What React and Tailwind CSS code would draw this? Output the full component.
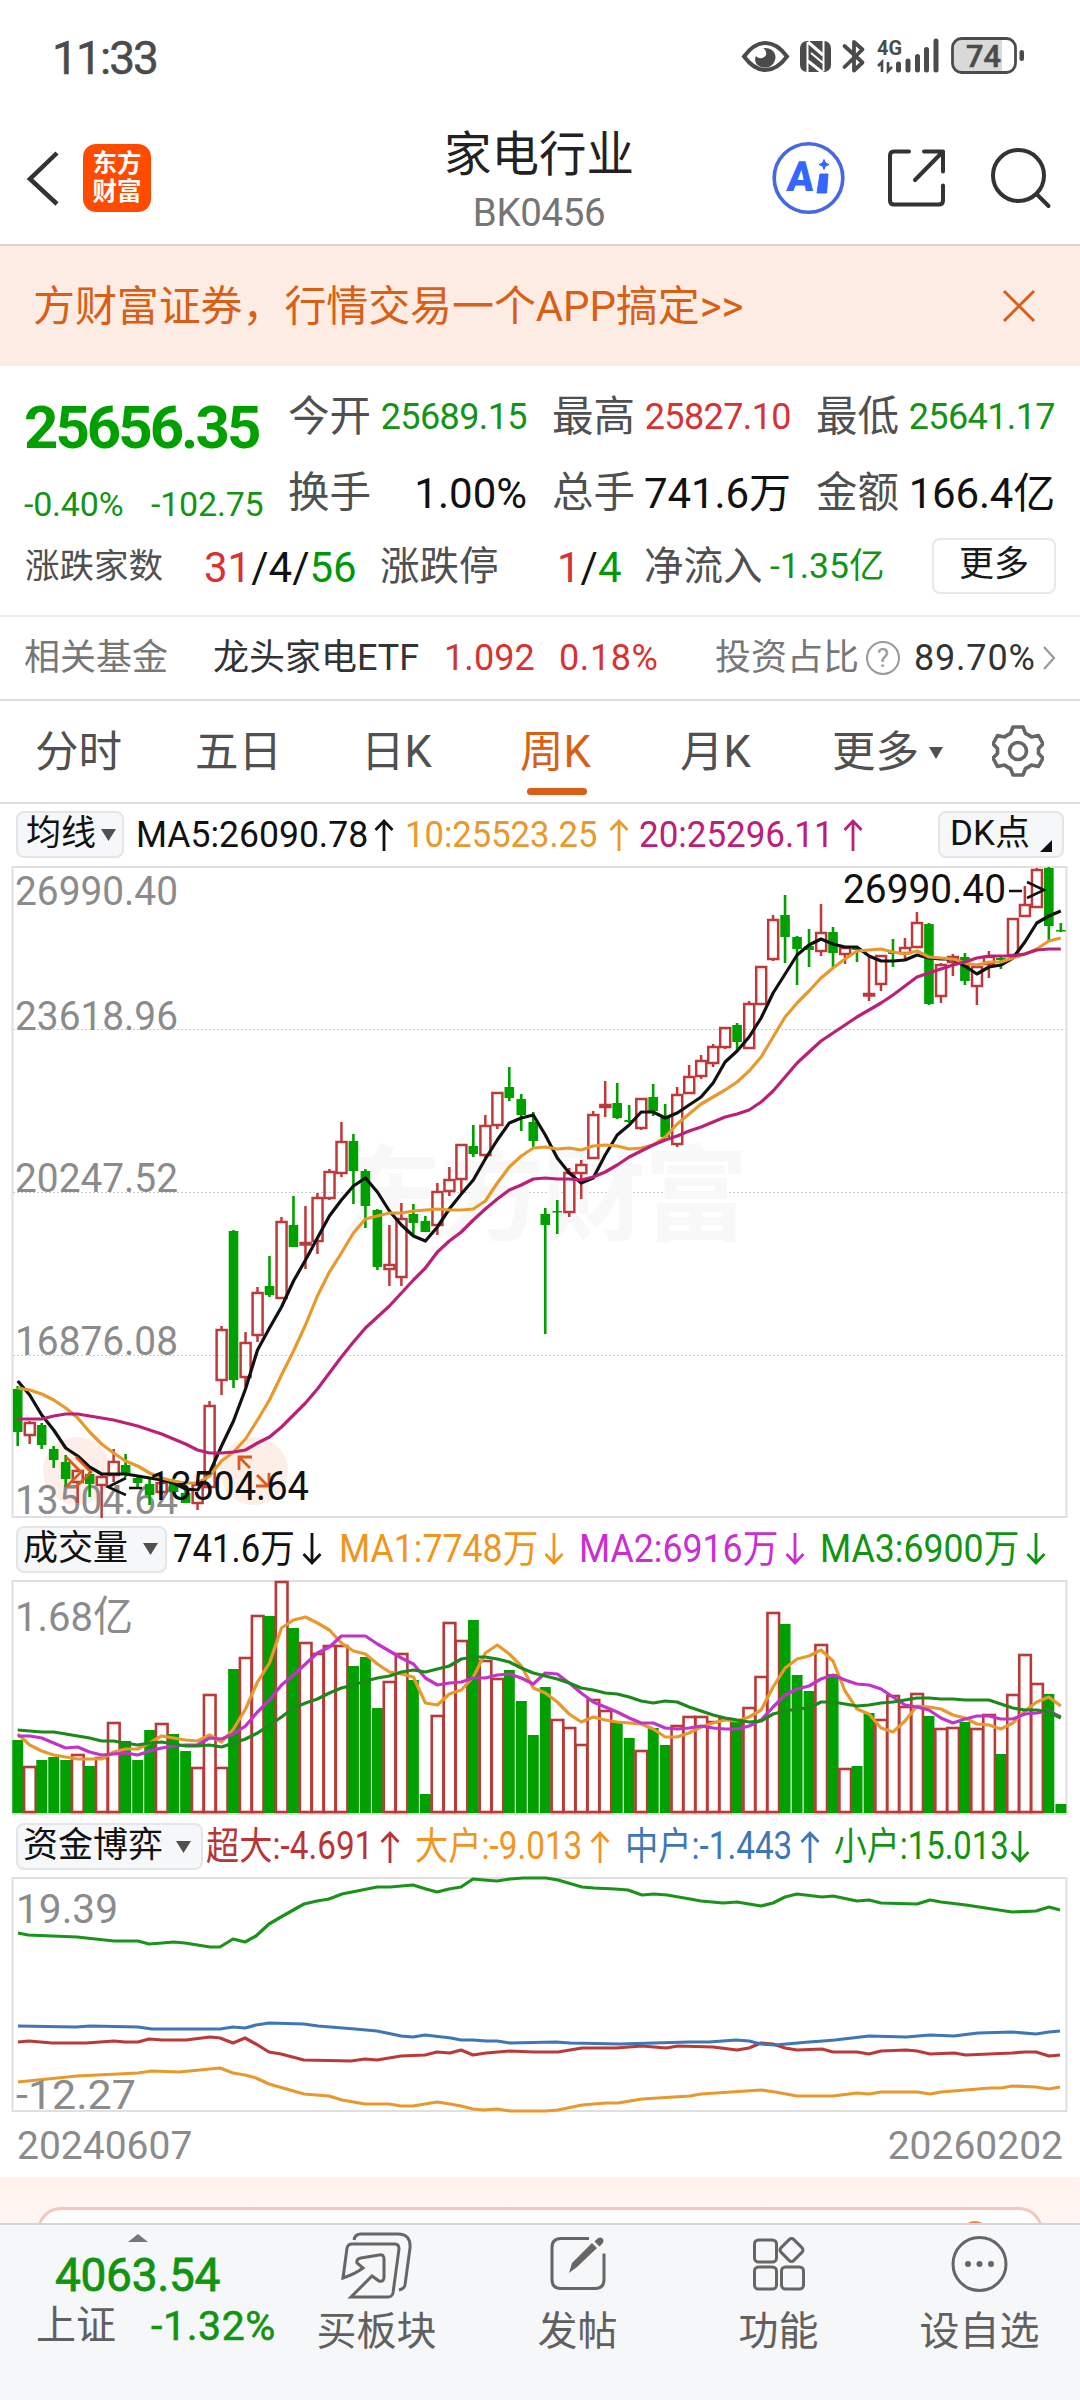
import React from "react";

const GREEN = "#00a000";
const RED = "#c0393a";
const STEP = 11.99;
const X0 = 17.7;

const barX = (i) => X0 + i * STEP;

// [direction, high, body top, body bottom, low]
const candles = [
  ["g", 1386, 1389, 1432, 1446], ["r", 1421, 1423, 1435, 1444], ["g", 1423, 1425, 1445, 1449],
  ["g", 1446, 1449, 1460, 1468], ["g", 1455, 1462, 1479, 1487], ["r", 1468, 1471, 1482, 1503],
  ["g", 1472, 1474, 1484, 1497], ["r", 1473, 1477, 1485, 1518], ["r", 1449, 1462, 1475, 1482],
  ["g", 1454, 1465, 1474, 1477], ["g", 1475, 1478, 1483, 1487], ["g", 1478, 1484, 1495, 1505],
  ["r", 1480, 1483, 1492, 1495], ["g", 1478, 1482, 1492, 1493], ["g", 1488, 1493, 1503, 1503],
  ["r", 1482, 1485, 1503, 1510], ["r", 1401, 1406, 1487, 1488], ["r", 1326, 1330, 1380, 1395],
  ["g", 1230, 1231, 1380, 1388], ["r", 1332, 1343, 1377, 1387], ["r", 1287, 1293, 1335, 1342],
  ["g", 1256, 1286, 1295, 1297], ["r", 1217, 1222, 1298, 1299], ["g", 1196, 1225, 1247, 1247],
  ["r", 1206, 1243, 1244, 1269], ["r", 1193, 1198, 1241, 1254], ["r", 1169, 1172, 1198, 1200],
  ["r", 1122, 1142, 1173, 1177], ["g", 1134, 1141, 1171, 1204], ["g", 1169, 1171, 1206, 1228],
  ["g", 1209, 1210, 1267, 1270], ["r", 1225, 1265, 1269, 1286], ["r", 1203, 1219, 1277, 1286],
  ["g", 1204, 1214, 1223, 1237], ["g", 1216, 1221, 1232, 1232], ["r", 1183, 1192, 1225, 1235],
  ["r", 1167, 1180, 1191, 1196], ["r", 1145, 1145, 1179, 1195], ["g", 1125, 1146, 1154, 1157],
  ["r", 1115, 1126, 1155, 1160], ["r", 1092, 1093, 1125, 1129], ["g", 1067, 1087, 1098, 1101],
  ["g", 1094, 1099, 1115, 1131], ["g", 1112, 1122, 1141, 1147], ["g", 1208, 1214, 1225, 1334],
  ["g", 1200, 1211, 1212, 1234], ["r", 1168, 1173, 1212, 1217], ["r", 1160, 1165, 1173, 1199],
  ["r", 1111, 1115, 1158, 1159], ["r", 1081, 1105, 1107, 1117], ["g", 1083, 1103, 1118, 1119],
  ["g", 1105, 1120, 1122, 1123], ["r", 1099, 1099, 1128, 1130], ["g", 1084, 1097, 1111, 1116],
  ["g", 1104, 1117, 1137, 1137], ["r", 1087, 1095, 1144, 1147], ["r", 1065, 1077, 1093, 1094],
  ["r", 1055, 1061, 1076, 1079], ["r", 1044, 1047, 1063, 1067], ["r", 1028, 1028, 1047, 1049],
  ["g", 1023, 1025, 1042, 1051], ["r", 1001, 1004, 1048, 1049], ["r", 967, 967, 1004, 1004],
  ["r", 915, 920, 959, 961], ["g", 895, 915, 937, 963], ["g", 936, 937, 949, 985],
  ["g", 929, 946, 950, 967], ["r", 904, 933, 951, 956], ["g", 927, 932, 953, 967],
  ["r", 946, 948, 954, 964], ["g", 946, 948, 950, 962], ["r", 957, 994, 995, 1001],
  ["r", 955, 956, 984, 991], ["g", 939, 952, 954, 967], ["r", 938, 948, 953, 960],
  ["r", 912, 923, 947, 947], ["g", 923, 924, 1004, 1005], ["r", 963, 965, 996, 1003],
  ["r", 954, 957, 962, 976], ["g", 953, 957, 981, 985], ["r", 967, 967, 986, 1005],
  ["r", 951, 957, 964, 978], ["g", 956, 958, 960, 969], ["r", 918, 919, 955, 956],
  ["r", 886, 905, 916, 917], ["r", 868, 870, 907, 908], ["g", 867, 868, 926, 940],
  ["g", 923, 930, 931, 932],
];

const ma5 = [
  1381, 1395, 1415, 1430, 1448, 1456, 1467, 1474, 1474, 1474, 1476, 1478, 1480, 1483, 1489, 1490,
  1473, 1446, 1421, 1389, 1350, 1328, 1307, 1281, 1260, 1238, 1216, 1200, 1186, 1178, 1192, 1211,
  1225, 1236, 1241, 1227, 1209, 1194, 1180, 1159, 1140, 1123, 1118, 1115, 1135, 1158, 1173, 1183,
  1178, 1155, 1135, 1125, 1112, 1112, 1118, 1113, 1105, 1097, 1083, 1062, 1051, 1037, 1018, 993,
  974, 955, 945, 939, 944, 947, 947, 956, 961, 961, 960, 955, 958, 959, 959, 966, 974, 967, 965,
  958, 942, 923, 916, 911,
];
const ma10 = [
  1388, 1390, 1394, 1400, 1408, 1418, 1432, 1444, 1453, 1461, 1466, 1473, 1478, 1481, 1483, 1483,
  1476, 1461, 1452, 1439, 1420, 1400, 1375, 1351, 1325, 1296, 1272, 1253, 1233, 1219, 1216, 1213,
  1213, 1211, 1210, 1209, 1210, 1210, 1209, 1201, 1183, 1167, 1156, 1148, 1147, 1149, 1148, 1150,
  1146, 1145, 1146, 1149, 1148, 1145, 1137, 1124, 1114, 1104, 1097, 1090, 1082, 1071, 1057, 1037,
  1017, 1003, 991, 978, 968, 959, 951, 950, 949, 952, 954, 951, 957, 958, 959, 963, 965, 962, 962,
  958, 954, 949, 941, 938,
];
const ma20 = [
  1419, 1419, 1419, 1416, 1414, 1414, 1416, 1418, 1420, 1423, 1426, 1430, 1434, 1439, 1444, 1450,
  1453, 1453, 1452, 1450, 1443, 1437, 1427, 1415, 1403, 1389, 1373, 1357, 1342, 1328, 1317, 1306,
  1293, 1280, 1268, 1252, 1241, 1232, 1220, 1209, 1199, 1190, 1185, 1179, 1178, 1179, 1179, 1180,
  1177, 1172, 1165, 1157, 1151, 1145, 1140, 1136, 1131, 1127, 1122, 1117, 1114, 1110, 1102, 1091,
  1077, 1063, 1052, 1041, 1033, 1025, 1017, 1010, 1003, 995, 986, 977, 973, 969, 965, 962, 958,
  956, 956, 956, 954, 950, 949, 949,
];

const volumes = [
  ["g", 1740], ["r", 1767], ["g", 1760], ["g", 1757], ["g", 1760], ["r", 1755], ["g", 1766], ["r", 1758],
  ["r", 1723], ["g", 1741], ["g", 1760], ["g", 1730], ["r", 1724], ["g", 1734], ["g", 1751], ["r", 1768],
  ["r", 1695], ["r", 1768], ["g", 1669], ["r", 1658], ["r", 1616], ["g", 1616], ["r", 1582], ["g", 1628],
  ["r", 1643], ["r", 1654], ["r", 1646], ["r", 1646], ["g", 1666], ["g", 1657], ["g", 1708], ["r", 1682],
  ["r", 1654], ["g", 1680], ["g", 1794], ["r", 1716], ["r", 1623], ["r", 1641], ["g", 1620], ["r", 1661],
  ["r", 1679], ["g", 1670], ["g", 1701], ["g", 1735], ["g", 1687], ["r", 1720], ["r", 1728], ["r", 1745],
  ["r", 1700], ["r", 1711], ["g", 1722], ["g", 1738], ["r", 1751], ["g", 1728], ["g", 1745], ["r", 1726],
  ["r", 1717], ["r", 1717], ["r", 1722], ["r", 1719], ["g", 1722], ["r", 1708], ["r", 1677], ["r", 1613],
  ["g", 1624], ["g", 1675], ["g", 1691], ["r", 1645], ["g", 1674], ["r", 1769], ["g", 1766], ["g", 1713],
  ["r", 1720], ["r", 1696], ["r", 1707], ["r", 1694], ["g", 1716], ["r", 1729], ["r", 1728], ["g", 1722],
  ["r", 1729], ["r", 1715], ["g", 1754], ["r", 1695], ["r", 1655], ["r", 1684], ["g", 1694], ["g", 1804],
];

const volMa1 = [
  1734, 1745, 1751, 1755, 1757, 1759, 1759, 1759, 1752, 1749, 1749, 1743, 1736, 1738, 1740, 1741,
  1735, 1742, 1729, 1709, 1682, 1663, 1628, 1620, 1617, 1623, 1630, 1643, 1651, 1654, 1664, 1672,
  1674, 1677, 1703, 1705, 1694, 1690, 1677, 1653, 1645, 1654, 1666, 1688, 1693, 1702, 1714, 1722,
  1717, 1720, 1722, 1723, 1724, 1729, 1737, 1737, 1733, 1727, 1723, 1720, 1721, 1717, 1710, 1687,
  1668, 1659, 1656, 1650, 1661, 1691, 1709, 1714, 1728, 1732, 1721, 1706, 1707, 1709, 1715, 1718,
  1724, 1725, 1729, 1723, 1711, 1702, 1697, 1706,
];
const volMa2 = [
  1736, 1736, 1738, 1743, 1748, 1747, 1752, 1755, 1754, 1753, 1755, 1751, 1748, 1746, 1745, 1745,
  1738, 1739, 1734, 1726, 1712, 1700, 1685, 1675, 1664, 1653, 1647, 1636, 1636, 1636, 1644, 1651,
  1658, 1664, 1678, 1685, 1683, 1682, 1678, 1678, 1675, 1674, 1678, 1684, 1673, 1674, 1683, 1693,
  1702, 1707, 1712, 1718, 1723, 1723, 1728, 1729, 1728, 1726, 1728, 1729, 1729, 1726, 1720, 1707,
  1695, 1689, 1686, 1679, 1675, 1680, 1684, 1685, 1689, 1697, 1705, 1707, 1710, 1718, 1723, 1719,
  1716, 1716, 1719, 1719, 1714, 1713, 1711, 1717,
];
const volMa3 = [
  1730, 1731, 1732, 1732, 1734, 1736, 1738, 1741, 1741, 1743, 1745, 1743, 1742, 1744, 1746, 1746,
  1745, 1747, 1743, 1739, 1733, 1725, 1717, 1708, 1703, 1699, 1693, 1688, 1685, 1681, 1678, 1676,
  1672, 1670, 1672, 1669, 1666, 1659, 1657, 1657, 1659, 1662, 1668, 1673, 1676, 1679, 1683, 1688,
  1690, 1693, 1694, 1697, 1701, 1703, 1701, 1702, 1707, 1711, 1715, 1718, 1720, 1722, 1721, 1714,
  1711, 1709, 1708, 1702, 1702, 1704, 1706, 1705, 1703, 1702, 1700, 1698, 1698, 1699, 1699, 1700,
  1700, 1700, 1704, 1708, 1710, 1710, 1712, 1718,
];

const flows = [
  { color: "#b93a38", points: "18,2042 29,2041 52,2043 86,2043 114,2041 125,2042 138,2042 149,2039 162,2040 186,2040 210,2037 220,2038 233,2043 245,2038 256,2044 269,2052 281,2054 304,2060 351,2061 365,2059 377,2060 401,2056 425,2055 437,2052 450,2053 461,2050 473,2055 486,2053 510,2051 534,2052 558,2052 582,2048 616,2048 642,2046 666,2048 678,2046 713,2047 737,2050 749,2048 761,2043 773,2044 785,2048 797,2050 822,2049 833,2052 857,2052 869,2054 881,2051 906,2050 917,2051 930,2054 954,2053 966,2055 1012,2053 1025,2052 1036,2052 1049,2056 1060,2055" },
  { color: "#e8992e", points: "18,2082 77,2076 138,2073 152,2071 179,2072 210,2069 220,2068 233,2073 245,2075 256,2078 269,2084 304,2094 329,2096 342,2100 365,2104 389,2104 401,2106 413,2106 437,2102 450,2104 461,2106 473,2109 484,2110 497,2109 510,2111 546,2111 558,2110 582,2105 606,2103 618,2103 642,2099 690,2096 701,2094 761,2090 775,2092 797,2096 822,2096 833,2096 857,2093 869,2094 881,2092 917,2092 930,2094 941,2092 978,2089 990,2088 1001,2088 1012,2086 1036,2087 1049,2089 1060,2087" },
  { color: "#3f76b5", points: "18,2026 76,2027 90,2026 138,2027 152,2029 220,2029 233,2027 245,2028 256,2025 269,2023 304,2024 318,2026 355,2029 377,2031 401,2036 413,2037 425,2035 451,2038 461,2040 473,2040 486,2041 497,2041 510,2043 556,2042 570,2043 620,2044 689,2042 709,2042 736,2040 749,2041 761,2044 775,2045 809,2042 823,2041 835,2040 869,2036 906,2037 930,2035 954,2036 978,2033 1012,2032 1036,2034 1049,2032 1060,2031" },
  { color: "#1b931b", points: "18,1933 28,1935 52,1936 77,1937 114,1941 138,1941 149,1944 162,1943 174,1942 185,1943 210,1947 220,1947 233,1939 245,1942 256,1936 269,1924 281,1917 304,1904 317,1901 329,1899 342,1894 377,1887 390,1887 413,1885 426,1889 437,1892 449,1889 461,1887 473,1879 484,1880 497,1881 510,1879 523,1878 546,1878 558,1880 582,1887 594,1888 615,1889 628,1890 642,1895 654,1894 667,1895 690,1899 701,1901 723,1903 737,1902 761,1906 773,1903 785,1897 797,1894 822,1897 833,1896 857,1901 869,1900 881,1903 917,1904 930,1900 941,1902 966,1905 1012,1912 1036,1911 1049,1907 1060,1910" },
];

const Line = ({ data, color, width = 3.2 }) => (
  <polyline
    points={data.map((y, i) => `${barX(i).toFixed(1)},${y}`).join(" ")}
    fill="none"
    stroke={color}
    strokeWidth={width}
    strokeLinejoin="round"
  />
);

const AxisText = ({ x, y, w, color = "#8b8b8b", children }) => (
  <text x={x} y={y} textLength={w} lengthAdjust="spacingAndGlyphs" fontSize="41.5" fill={color}>
    {children}
  </text>
);

const Arrow = ({ down = false, className = "" }) => (
  <svg
    width="20"
    height="34"
    viewBox="0 0 20 34"
    fill="none"
    stroke="currentColor"
    strokeWidth="2.8"
    className={`shrink-0 ${down ? "rotate-180" : ""} ${className}`}
  >
    <path d="M10 33V3M1.5 12 10 3l8.5 9" />
  </svg>
);

const Caret = ({ className = "" }) => (
  <svg width="15" height="12" viewBox="0 0 15 12" className={`shrink-0 ${className}`}>
    <path d="M0 0h15L7.500 12z" fill="#505050" />
  </svg>
);

const StatusBar = () => (
  <div className="flex h-[115px] items-start pl-[52px] pt-[32px] text-[#4b4b4b]">
    <span className="w-[689px] text-[46px] leading-[53px] tracking-[-1.9px] [-webkit-text-stroke:0.5px_#4b4b4b]">11:33</span>
    <svg width="290" height="46" viewBox="741 34 290 46" className="mt-[1px]" fill="none">
      <path d="M744 57.500Q754 44 765.500 44T787 57.500Q777 71 765.500 71T744 57.500z" stroke="#4b4b4b" strokeWidth="4" />
      <path d="M763 49c10-1 14 6 12 12-2 7-9 9-14 7-6-2-7-8-5-11 2 3 8 3 10-1 1-3-1-6-3-7z" fill="#4b4b4b" />
      <rect x="800" y="42" width="31" height="31" rx="7" fill="#4b4b4b" />
      <path d="M807.500 43v30M823.500 42v30" stroke="#fff" strokeWidth="2" />
      <path d="M808 43l15 13M808 62l15 12" stroke="#fff" strokeWidth="3" />
      <path d="M811 54l12 10" stroke="#fff" strokeWidth="2" />
      <path d="m844.500 47 18 16.500-8.500 8V43l8.500 7.500L844.500 68" stroke="#4b4b4b" strokeWidth="3.800" strokeLinejoin="round" strokeLinecap="round" />
      <text x="877" y="56" fontSize="21" fontWeight="700" fill="#4b4b4b" textLength="25" lengthAdjust="spacingAndGlyphs">4G</text>
      <path d="M882 73V63l-4 4M888 63v9l4-4" stroke="#4b4b4b" strokeWidth="2.600" />
      <path d="M898.500 65v6M908 62v9M917.500 57.500V71M926.500 50.500V71M936 42v29" stroke="#4b4b4b" strokeWidth="5" strokeLinecap="round" />
      <path d="M960 40h42v33h-42q-7 0-7-7V47q0-7 7-7z" fill="#d9d9d9" />
      <rect x="952.500" y="39.500" width="63" height="34" rx="9" stroke="#4b4b4b" strokeWidth="2.800" />
      <rect x="1019.500" y="51" width="4.500" height="11" rx="2.200" fill="#4b4b4b" />
      <text x="966" y="67.500" fontSize="32" fontWeight="500" fill="#4b4b4b" stroke="#4b4b4b" strokeWidth="0.6" textLength="35" lengthAdjust="spacingAndGlyphs">74</text>
    </svg>
  </div>
);

const Header = () => (
  <header className="flex h-[131px] items-start border-b-2 border-[#d6d6d6]">
    <svg width="36" height="60" viewBox="0 0 36 60" fill="none" className="ml-[24px] mt-[33px]">
      <path d="M33 5 6 31l27 25" stroke="#333" strokeWidth="4.500" />
    </svg>
    <div className="ml-[23px] mt-[29px] flex h-[68px] w-[68px] flex-col items-center justify-center rounded-[13px] bg-[#ff4b00] text-[24.5px] font-bold leading-[28px] text-white">
      <span>东方</span>
      <span>财富</span>
    </div>
    <div className="ml-[265px] w-[246px] text-center">
      <h1 className="whitespace-nowrap pt-[10px] text-[47.5px] leading-[60px] text-[#222]">家电行业</h1>
      <p className="pt-[6px] text-[38.5px] leading-[44px] tracking-[-0.4px] text-[#757575]">BK0456</p>
    </div>
    <svg width="300" height="80" viewBox="760 138 300 80" fill="none" className="ml-[98px] mt-[23px]">
      <circle cx="808.500" cy="178" r="34.300" stroke="#4468e6" strokeWidth="3.600" />
      <g transform="translate(786 191) skewX(-5)">
        <text x="0" y="0" fontSize="42" fontWeight="900" fill="#3566ff" textLength="27" lengthAdjust="spacingAndGlyphs">A</text>
      </g>
      <path d="M820 174h8l-1.500 19H817z" fill="#3566ff" stroke="#3566ff" strokeWidth="1" strokeLinejoin="round" />
      <path d="m824 159.500 1.500 3.500 3.500 1.500-3.500 1.500-1.500 3.500-1.500-3.500-3.500-1.500 3.500-1.500z" fill="#3566ff" stroke="#3566ff" />
      <path
        d="M909 151.500h-15q-4 0-4 4v45q0 4 4 4h45q4 0 4-4V185.500M924 151.500h19v20M943 151.500 915 180"
        stroke="#333"
        strokeWidth="4"
        strokeLinecap="round"
        strokeLinejoin="round"
      />
      <circle cx="1018.500" cy="175.500" r="25.500" stroke="#333" strokeWidth="4" />
      <path d="m1036.500 194 12 12" stroke="#333" strokeWidth="4" strokeLinecap="round" />
    </svg>
  </header>
);

const Banner = () => (
  <div className="flex h-[120px] items-center justify-between bg-[#fcece3] pl-[33px] pr-[44px] text-[#d95f16]">
    <span className="whitespace-nowrap text-[42px] tracking-[-0.1px]">方财富证券，行情交易一个APP搞定&gt;&gt;</span>
    <svg width="34" height="34" viewBox="0 0 34 34" fill="none" stroke="currentColor" strokeWidth="3">
      <path d="m2 2 30 30M32 2 2 32" />
    </svg>
  </div>
);

const Stat = ({ label, value, className }) => (
  <div className="flex w-[239px] items-center justify-between whitespace-nowrap">
    <span className="text-[41.5px] text-[#505050]">{label}</span>
    <span className={className}>{value}</span>
  </div>
);

const Quote = () => (
  <section className="h-[249px]">
    <div className="flex h-[164px]">
      <div className="w-[288px] pl-[24px] text-[#00a000]">
        <div className="mt-[25px] text-[60px] font-bold leading-[74px] tracking-[-3px]">25656.35</div>
        <div className="mt-[18px] flex whitespace-nowrap text-[34px] leading-[42px] tracking-[-0.2px] text-[#149414]">
          <span className="w-[127px]">-0.40%</span>
          <span>-102.75</span>
        </div>
      </div>
      <div className="grid h-[164px] grid-cols-[239px_239px_239px] grid-rows-[76px_76px] gap-x-[25px] pt-[13px]">
        <Stat label="今开" value="25689.15" className="text-[36px] tracking-[-0.6px] text-[#149414]" />
        <Stat label="最高" value="25827.10" className="text-[36px] tracking-[-0.6px] text-[#d63333]" />
        <Stat label="最低" value="25641.17" className="text-[36px] tracking-[-0.6px] text-[#149414]" />
        <Stat label="换手" value="1.00%" className="text-[42px] text-[#111]" />
        <Stat label="总手" value="741.6万" className="text-[42px] tracking-[-0.1px] text-[#111]" />
        <Stat label="金额" value="166.4亿" className="text-[42px] tracking-[-0.2px] text-[#111]" />
      </div>
    </div>
    <div className="flex h-[74px] items-center whitespace-nowrap pl-[25px]">
      <span className="w-[179px] text-[34.5px] text-[#505050]">涨跌家数</span>
      <span className="w-[176px] text-[42px] text-[#111]">
        <b className="font-normal text-[#d63333]">31</b>/4/<b className="font-normal text-[#00980a]">56</b>
      </span>
      <span className="w-[177px] text-[39.500px] text-[#505050]">涨跌停</span>
      <span className="w-[87px] text-[42px] text-[#111]">
        <b className="font-normal text-[#d63333]">1</b>/<b className="font-normal text-[#00980a]">4</b>
      </span>
      <span className="w-[126px] text-[39.500px] text-[#505050]">净流入</span>
      <span className="w-[162px] text-[35.500px] text-[#149414]">-1.35亿</span>
      <span className="mt-[-3px] flex h-[56px] w-[124px] items-center justify-center rounded-[8px] border-2 border-[#e6e8ea] text-[35px] text-[#1a1a1a]">
        更多
      </span>
    </div>
  </section>
);

const Funds = () => (
  <div className="flex h-[86px] items-center whitespace-nowrap border-b-2 border-t-2 border-b-[#dcdcdc] border-t-[#ededed] pb-[1px] pl-[24px] text-[36px] text-[#333]">
    <span className="w-[189px] text-[36px] text-[#777]">相关基金</span>
    <span className="w-[231px] text-[36px]">龙头家电ETF</span>
    <span className="w-[115px] tracking-[0.1px] text-[#d63333]">1.092</span>
    <span className="w-[156px] tracking-[0.6px] text-[#d63333]">0.18%</span>
    <span className="w-[151px] text-[36px] text-[#777]">投资占比</span>
    <span className="mr-[14px] flex h-[34px] w-[34px] items-center justify-center rounded-full border-[2.500px] border-[#999] text-[26px] leading-none text-[#999]">?</span>
    <span className="w-[128px] tracking-[0.8px]">89.70%</span>
    <svg width="14" height="28" viewBox="0 0 14 28" fill="none" stroke="#999" strokeWidth="2.200">
      <path d="m2 3 10 11L2 25" />
    </svg>
  </div>
);

const tabs = [
  { name: "分时", width: "w-[160px]" },
  { name: "五日", width: "w-[166px]" },
  { name: "日K", width: "w-[159px]" },
  { name: "周K", width: "w-[160px]", active: true },
  { name: "月K", width: "w-[152px]" },
];

const Tabs = () => (
  <nav className="flex h-[103px] items-start whitespace-nowrap border-b-2 border-[#dcdcdc] pl-[35px] text-[43.5px] text-[#505050]">
    {tabs.map((tab) => (
      <div key={tab.name} className={tab.width}>
        <div className={tab.active ? "w-fit text-[#d95f16]" : "w-fit"}>
          <div className="pt-[19px] leading-[66px]">{tab.name}</div>
          {tab.active && <div className="ml-[7px] mt-[2px] h-[7px] w-[60px] rounded-full bg-[#d95f16]" />}
        </div>
      </div>
    ))}
    <div className="flex w-[160px] items-center pt-[19px] leading-[66px]">
      更多
      <svg width="14" height="12" viewBox="0 0 14 12" className="ml-[10px]">
        <path d="M0 0h14L7 12z" fill="#505050" />
      </svg>
    </div>
    <svg width="52" height="52" viewBox="-26 -26 52 52" fill="none" stroke="#666" strokeWidth="3.600" strokeLinejoin="round" className="mt-[24px]">
      <path d="M-5-24H5L7.500-17.500Q11-16 13.500-14L20.500-15.500 25-7 20.500-2.500V2.500L25 7 20.500 15.500 13.500 14Q11 16 7.500 17.500L5 24H-5L-7.500 17.500Q-11 16-13.500 14L-20.500 15.500-25 7-20.500 2.500V-2.500L-25-7-20.500-15.500-13.500-14Q-11-16-7.500-17.500z" />
      <circle r="8.500" />
    </svg>
  </nav>
);

const PickButton = ({ children, className = "" }) => (
  <div className={`flex h-[47px] shrink-0 items-center rounded-[8px] border-2 border-[#e3e5e9] bg-[#f6f7f9] text-[35px] text-[#111] ${className}`}>
    {children}
  </div>
);

const CandleChart = () => (
  <svg width="1080" height="656" viewBox="0 864 1080 656" className="block overflow-visible">
    <g stroke="#e0e0e0" strokeWidth="2" fill="none">
      <rect x="12.500" y="867" width="1054" height="650" />
      <path d="M13 1029.500H1066M13 1192.500H1066M13 1355.500H1066" stroke="#ccc" strokeWidth="1" strokeDasharray="2 2" />
    </g>
    <text x="338" y="1233" fontSize="104" fontWeight="700" fill="#f8f8f8" textLength="410">东方财富</text>
    <circle cx="77" cy="1471" r="34" fill="#fdeee7" />
    <circle cx="254" cy="1471" r="34" fill="#fdeee7" />
    <g fill="#8b8b8b">
      <AxisText x="15" y="905" w="163">26990.40</AxisText>
      <AxisText x="15" y="1030" w="163">23618.96</AxisText>
      <AxisText x="15" y="1192" w="163">20247.52</AxisText>
      <AxisText x="15" y="1355" w="163">16876.08</AxisText>
      <AxisText x="15" y="1514" w="163">13504.64</AxisText>
    </g>
    {candles.map(([dir, high, top, bottom, low], i) => {
      const x = barX(i);
      const h = Math.max(bottom - top, 1.500);
      return dir === "g" ? (
        <g key={i} fill={GREEN}>
          <rect x={x - 1.3} y={high} width="2.600" height={low - high} />
          <rect x={x - 4.8} y={top} width="9.600" height={h} />
        </g>
      ) : (
        <g key={i} stroke={RED} strokeWidth="2.500" fill="none">
          <path d={`M${x} ${high}V${top}M${x} ${bottom}V${low}`} />
          <rect x={x - 4.9} y={top} width="10" height={h} />
        </g>
      );
    })}
    <Line data={ma5} color="#111" />
    <Line data={ma10} color="#e8992e" />
    <Line data={ma20} color="#bb2079" />
    <path d="m66 1457 15 15-15 15M76 1457l15 15-15 15" stroke="#dd5a1a" strokeWidth="2.800" fill="none" />
    <path d="M239 1470v-13h13M240 1458l10 10M256 1486h13v-13M267 1485l-10-10" stroke="#dd5a1a" strokeWidth="2.800" fill="none" />
    <path d="M126 1478 108 1487l18 8M129 1488h13M1009 891h13M1027 882l17 8-17 8" stroke="#111" strokeWidth="2.600" fill="none" />
    <AxisText x="843" y="903" w="163" color="#111">26990.40</AxisText>
    <AxisText x="149" y="1500" w="160" color="#111">13504.64</AxisText>
  </svg>
);

const VolumeChart = () => (
  <svg width="1080" height="240" viewBox="0 1578 1080 240" className="block overflow-visible">
    <rect x="12.500" y="1581" width="1054" height="233" stroke="#e0e0e0" strokeWidth="2" fill="none" />
    <AxisText x="15" y="1631" w="118">1.68亿</AxisText>
    {volumes.map(([dir, top], i) =>
      dir === "g" ? (
        <rect key={i} x={barX(i) - 5.4} y={top} width="10.900" height={1813 - top} fill={GREEN} />
      ) : (
        <rect key={i} x={barX(i) - 5.6} y={top} width="11.600" height={1812 - top} fill="#fff" stroke="#b93a38" strokeWidth="2.600" />
      )
    )}
    <Line data={volMa1} color="#e8992e" />
    <Line data={volMa2} color="#c233c9" />
    <Line data={volMa3} color="#1b891b" />
  </svg>
);

const FlowChart = () => (
  <svg width="1080" height="240" viewBox="0 1875 1080 240" className="block overflow-visible">
    <rect x="12.500" y="1878" width="1054" height="233" stroke="#e0e0e0" strokeWidth="2" fill="none" />
    <AxisText x="16" y="1923" w="102">19.39</AxisText>
    {flows.map((flow) => (
      <polyline key={flow.color} points={flow.points} fill="none" stroke={flow.color} strokeWidth="3.200" strokeLinejoin="round" />
    ))}
    <AxisText x="16" y="2109" w="120">-12.27</AxisText>
  </svg>
);

// Indicator readouts use slightly condensed glyphs
const Reading = ({ className, squeeze = "scale-x-[0.875]", children }) => (
  <span className={`shrink-0 ${className}`}>
    <span className={`inline-block origin-left ${squeeze}`}>{children}</span>
  </span>
);

const Charts = () => (
  <section className="whitespace-nowrap text-[37px]">
    <div className="flex h-[60px] items-center pl-[16px] pt-[1px]">
      <PickButton className="w-[108px] pl-[8px]">
        均线
        <Caret className="ml-[5px]" />
      </PickButton>
      <Reading squeeze="scale-x-[0.96]" className="ml-[12px] w-[238px] text-[#111]">MA5:26090.78</Reading>
      <Arrow className="text-[#111]" />
      <Reading squeeze="scale-x-[0.935]" className="ml-[11px] w-[204px] text-[#e8992e]">10:25523.25</Reading>
      <Arrow className="text-[#e8992e]" />
      <Reading squeeze="scale-x-[0.945]" className="ml-[10px] w-[204px] text-[#bb2079]">20:25296.11</Reading>
      <Arrow className="text-[#bb2079]" />
      <PickButton className="ml-[75px] w-[126px] pl-[10px]">
        DK点
        <svg width="12" height="12" viewBox="0 0 12 12" className="ml-[10px] mt-[22px]">
          <path d="M12 0v12H0z" fill="#111" />
        </svg>
      </PickButton>
    </div>
    <CandleChart />
    <div className="flex h-[58px] items-center pl-[16px] text-[39px]">
      <PickButton className="w-[151px] pl-[5px]">
        成交量
        <Caret className="ml-[15px]" />
      </PickButton>
      <Reading squeeze="scale-x-[0.89]" className="ml-[6px] w-[129px] text-[#111]">741.6万</Reading>
      <Arrow down className="text-[#111]" />
      <Reading squeeze="scale-x-[0.915]" className="ml-[17px] w-[205px] text-[#f0961e]">MA1:7748万</Reading>
      <Arrow down className="text-[#f0961e]" />
      <Reading squeeze="scale-x-[0.915]" className="ml-[15px] w-[206px] text-[#c92fd0]">MA2:6916万</Reading>
      <Arrow down className="text-[#c92fd0]" />
      <Reading squeeze="scale-x-[0.915]" className="ml-[15px] w-[206px] text-[#119411]">MA3:6900万</Reading>
      <Arrow down className="text-[#119411]" />
    </div>
    <VolumeChart />
    <div className="flex h-[57px] items-center pl-[16px] text-[38px]">
      <PickButton className="w-[187px] pl-[5px]">
        资金博弈
        <Caret className="ml-[13px]" />
      </PickButton>
      <Reading className="ml-[3px] w-[174px] text-[#b93434]">超大:-4.691</Reading>
      <Arrow className="text-[#b93434]" />
      <Reading className="ml-[15px] w-[175px] text-[#f0961e]">大户:-9.013</Reading>
      <Arrow className="text-[#f0961e]" />
      <Reading className="ml-[15px] w-[175px] text-[#3f76b5]">中户:-1.443</Reading>
      <Arrow className="text-[#3f76b5]" />
      <Reading squeeze="scale-x-[0.865]" className="ml-[14px] w-[176px] text-[#119411]">小户:15.013</Reading>
      <Arrow down className="text-[#119411]" />
    </div>
    <FlowChart />
    <div className="flex h-[62px] justify-between pl-[17px] pr-[17px] pt-[7px] text-[39px] leading-[48px] text-[#8b8b8b]">
      <span>20240607</span>
      <span>20260202</span>
    </div>
  </section>
);

const iconBoxes = {
  买板块: "336 2230 80 70",
  发帖: "537 2230 80 70",
  功能: "738.5 2230 80 70",
  设自选: "939.5 2230 80 70",
};

const NavItem = ({ label, children }) => (
  <div className="flex flex-col items-center">
    <svg width="80" height="70" viewBox={iconBoxes[label]} fill="none" stroke="#666" strokeWidth="3" className="mt-[5px]">
      {children}
    </svg>
    <span>{label}</span>
  </div>
);

const BottomBar = () => (
  <footer className="flex h-[177px] border-t-2 border-[#d3d5d9] bg-[#f6f7f9] text-[40px] text-[#606060]">
    <div className="w-[276px] whitespace-nowrap">
      <svg width="20" height="8" viewBox="0 0 20 8" className="ml-[128px] mt-[9px] block">
        <path d="M10 0 20 8H0z" fill="#777" />
      </svg>
      <div className="ml-[55px] mt-[5px] text-[46px] leading-[56px] tracking-[-0.3px] text-[#119411] [-webkit-text-stroke:0.8px_#119411]">4063.54</div>
      <div className="flex items-center pl-[36px] leading-[46px]">
        <span className="w-[116px]">上证</span>
        <span className="text-[41px] tracking-[0.6px] text-[#119411] [-webkit-text-stroke:0.6px_#119411]">-1.32%</span>
      </div>
    </div>
    <div className="grid grow grid-cols-[201px_201px_201px_201px] text-center leading-[64px]">
      <NavItem label="买板块">
        <path d="M353 2241q1-6 7-6h37q13 0 12 14l-5 37q-1 4-6 5M342 2279l4-30q1-4 5-4h43q4 0 4 5l-6 44q-1 4-5 4h-37l21-21 7 5q5 1 5-4v-18q0-5-5-4l-18 3q-5 1-4 5l6 5q-8 6-20 10z" transform="translate(0 -1)" />
      </NavItem>
      <NavItem label="发帖">
        <path d="M588 2238.500h-28q-9 0-9 9v32q0 9 9 9h34q9 0 9-9v-26" />
        <path d="M568 2273l3-10 20-20 5 5-20 19zM593.500 2241.500l3-3q3-2 5 0t0 5l-3 3z" fill="#666" stroke="none" />
      </NavItem>
      <NavItem label="功能">
        <rect x="754" y="2240" width="22" height="22" rx="4" />
        <rect x="754" y="2267" width="22" height="22" rx="4" />
        <rect x="781" y="2267" width="22" height="22" rx="4" />
        <rect x="782" y="2241" width="18" height="18" rx="3" transform="rotate(45 791 2250)" />
      </NavItem>
      <NavItem label="设自选">
        <circle cx="979" cy="2264" r="26.500" />
        <g fill="#666" stroke="none">
          <circle cx="967.500" cy="2264" r="3" />
          <circle cx="979" cy="2264" r="3" />
          <circle cx="990.500" cy="2264" r="3" />
        </g>
      </NavItem>
    </div>
  </footer>
);

export default function App() {
  return (
    <div className="flex h-[2400px] w-[1080px] flex-col overflow-hidden bg-white font-[Roboto,'Noto_Sans_CJK_SC',sans-serif]">
      <StatusBar />
      <Header />
      <Banner />
      <Quote />
      <Funds />
      <Tabs />
      <Charts />
      <div className="h-[46px] overflow-hidden bg-gradient-to-b from-[#fff2ed] to-[#fff7f3] px-[37px] pt-[30px]">
        <div className="flex h-[80px] justify-end rounded-[24px] border-[3px] border-[#f5c6bb] bg-white pr-[52px] pt-[11px]">
          <div className="h-[26px] w-[26px] rounded-full bg-[#e5894c]" />
        </div>
      </div>
      <BottomBar />
    </div>
  );
}
